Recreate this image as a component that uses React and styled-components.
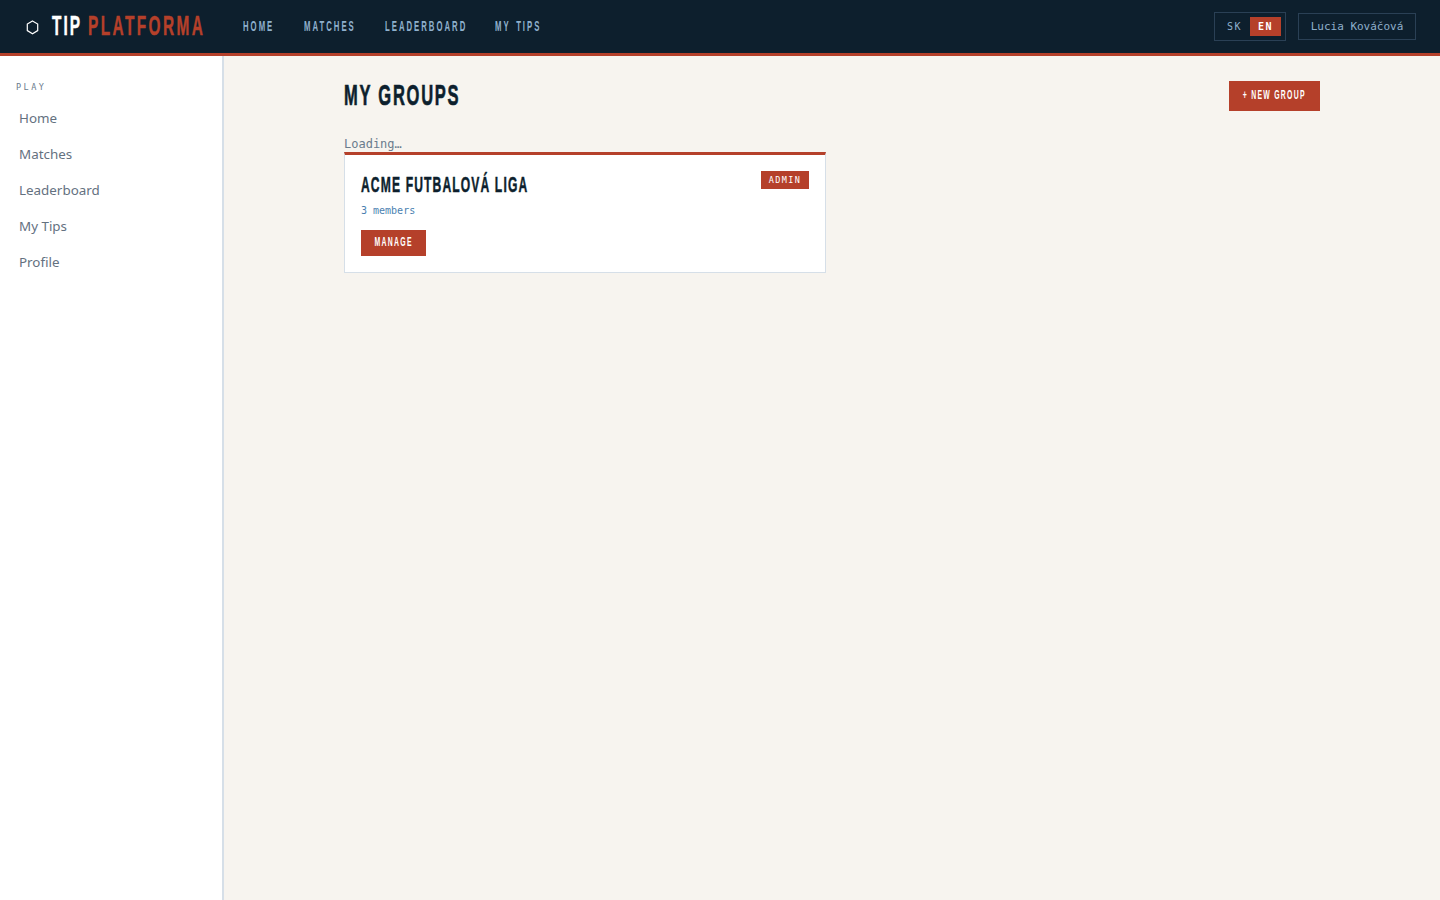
import React from 'react'
import styled, { createGlobalStyle } from 'styled-components'

const GlobalStyle = createGlobalStyle`
  * { box-sizing: border-box; }
  html, body { margin: 0; padding: 0; height: 100%; }
  body {
    background: #f7f4ef;
    font-family: "Noto Sans", "Liberation Sans", sans-serif;
  }
`

const display = `"Liberation Sans", sans-serif`
const mono = `"DejaVu Sans Mono", "Liberation Mono", monospace`

const Page = styled.div`
  display: flex;
  flex-direction: column;
  height: 900px;
  overflow: hidden;
`

// no condensed font is installed, so the display text gets squeezed sideways
const Squeezed = styled.span`
  display: inline-block;
  flex: none;
  white-space: nowrap;
  font-family: ${display};
  font-weight: 700;
  font-size: ${p => p.$size}px;
  letter-spacing: ${p => p.$spacing}px;
  word-spacing: ${p => p.$words || 0}px;
  transform: scaleX(${p => p.$scale || 0.55});
  transform-origin: ${p => p.$origin || 'left'} center;
  -webkit-text-stroke: ${p => p.$stroke || 0}px currentColor;
`

const Topbar = styled.header`
  display: flex;
  align-items: center;
  height: 56px;
  flex: none;
  padding: 0 24px 2px;
  background: #0d1f2d;
  border-bottom: 3px solid #b5402a;
`

const Logo = styled.div`
  display: flex;
  align-items: center;
  width: 219px;
  flex: none;
  color: #fff;
`

const LogoMark = styled.svg`
  width: 13px;
  height: 15px;
  margin: 4px 13px 0 2px;
  flex: none;
`

const LogoSlot = styled.span`
  display: flex;
  width: ${p => p.$width}px;
  flex: none;
  color: ${p => p.$color};
`

const TopNav = styled.nav`
  display: flex;
  gap: 29px;
`

const TopLink = styled.a`
  display: flex;
  width: ${p => p.$width}px;
  color: #8fb0cc;
`

const TopRight = styled.div`
  display: flex;
  align-items: center;
  gap: 12px;
  margin: 2px 0 0 auto;
`

const LangSwitch = styled.div`
  display: flex;
  align-items: center;
  height: 29px;
  padding: 0 4px;
  border: 1px solid #2a4055;
`

const LangButton = styled.span`
  display: flex;
  align-items: center;
  justify-content: center;
  width: 31px;
  height: 19px;
  font-family: ${mono};
  font-size: 10px;
  font-weight: ${p => (p.$active ? 700 : 400)};
  letter-spacing: 1.5px;
  color: ${p => (p.$active ? '#fff' : '#8fb0cc')};
  background: ${p => (p.$active ? '#b5402a' : 'transparent')};
`

const UserChip = styled.div`
  display: flex;
  align-items: center;
  justify-content: center;
  width: 118px;
  height: 27px;
  border: 1px solid #2a4055;
  font-family: ${mono};
  font-size: 11px;
  color: #8fb0cc;
`

const Body = styled.div`
  display: flex;
  flex: 1;
  min-height: 0;
`

const Sidebar = styled.aside`
  width: 224px;
  flex: none;
  padding: 26px 0 0 16px;
  background: #fff;
  border-right: 2px solid #d6dfe8;
`

const SideLabel = styled.div`
  font-family: ${mono};
  font-size: 8.5px;
  line-height: 11px;
  letter-spacing: 2.5px;
  color: #6b7c8d;
  margin-bottom: 7px;
`

const SideLink = styled.a`
  display: flex;
  align-items: center;
  height: 36px;
  padding-left: 3px;
  font-size: 13.4px;
  color: #64717f;
`

const Main = styled.main`
  flex: 1;
  padding: 25px 120px 0;
`

const HeadRow = styled.div`
  display: flex;
  align-items: center;
  justify-content: space-between;
  height: 30px;
  margin-bottom: 26px;
`

const Title = styled.h1`
  display: flex;
  margin: -2px 0 0;
  font-size: inherit;
  color: #0d1f2d;
`

const PrimaryButton = styled.button`
  display: flex;
  align-items: center;
  justify-content: center;
  height: ${p => p.$height}px;
  width: ${p => p.$width}px;
  padding: 0 0 2px;
  border: 0;
  background: #b5402a;
  color: #fff;
`

const Loading = styled.div`
  font-family: ${mono};
  font-size: 12px;
  line-height: 14px;
  margin-bottom: 1px;
  color: #6b7c8d;
`

const Card = styled.div`
  position: relative;
  width: 482px;
  height: 121px;
  padding: 18px 16px 0;
  background: #fff;
  border: 1px solid #d6dfe8;
  border-top: 3px solid #b5402a;
`

const CardTitle = styled.h2`
  display: flex;
  margin: 0;
  font-size: inherit;
  line-height: 24px;
  color: #0d1f2d;
`

const Badge = styled.span`
  position: absolute;
  top: 16px;
  right: 16px;
  display: flex;
  align-items: center;
  justify-content: center;
  width: 48px;
  height: 18px;
  background: #b5402a;
  color: #fff;
  font-family: ${mono};
  font-size: 8.5px;
  letter-spacing: 1.4px;
`

const Members = styled.div`
  margin: 8px 0 13px;
  font-family: ${mono};
  font-size: 10px;
  line-height: 12px;
  color: #4a7fb0;
`

const navItems = [
  { label: 'Home', width: 32 },
  { label: 'Matches', width: 52 },
  { label: 'Leaderboard', width: 81 },
  { label: 'My Tips', width: 47 },
]

export default function App() {
  return (
    <Page>
      <GlobalStyle />
      <Topbar>
        <Logo>
          <LogoMark viewBox="0 0 13 15" fill="none">
            <path d="M6.5 1l5.2 3v6.6l-5.2 3.2-5.2-3.2V4z" stroke="#fff" strokeWidth="1.2" />
          </LogoMark>
          <LogoSlot $width={36} $color="#fff">
            <Squeezed $size={28} $spacing={3.6} $stroke={0.5}>TIP</Squeezed>
          </LogoSlot>
          <LogoSlot $width={118} $color="#b5402a">
            <Squeezed $size={28} $spacing={4.4} $stroke={0.5}>PLATFORMA</Squeezed>
          </LogoSlot>
        </Logo>
        <TopNav>
          {navItems.map(item => (
            <TopLink key={item.label} $width={item.width}>
              <Squeezed $size={15.5} $spacing={4} $scale={0.5} $words={3}>{item.label.toUpperCase()}</Squeezed>
            </TopLink>
          ))}
        </TopNav>
        <TopRight>
          <LangSwitch>
            <LangButton>SK</LangButton>
            <LangButton $active>EN</LangButton>
          </LangSwitch>
          <UserChip>Lucia Kováčová</UserChip>
        </TopRight>
      </Topbar>
      <Body>
        <Sidebar>
          <SideLabel>PLAY</SideLabel>
          {navItems.map(item => (
            <SideLink key={item.label}>{item.label}</SideLink>
          ))}
          <SideLink>Profile</SideLink>
        </Sidebar>
        <Main>
          <HeadRow>
            <Title>
              <Squeezed $size={30} $spacing={3.2} $stroke={0.7}>MY GROUPS</Squeezed>
            </Title>
            <PrimaryButton $width={91} $height={30}>
              <Squeezed $size={12.5} $spacing={2.3} $origin="center">+ NEW GROUP</Squeezed>
            </PrimaryButton>
          </HeadRow>
          <Loading>Loading…</Loading>
          <Card>
            <CardTitle>
              <Squeezed $size={22} $spacing={2.05} $stroke={0.5}>ACME FUTBALOVÁ LIGA</Squeezed>
            </CardTitle>
            <Badge>ADMIN</Badge>
            <Members>3 members</Members>
            <PrimaryButton $width={65} $height={26}>
              <Squeezed $size={12.5} $spacing={2.3} $origin="center">MANAGE</Squeezed>
            </PrimaryButton>
          </Card>
        </Main>
      </Body>
    </Page>
  )
}
